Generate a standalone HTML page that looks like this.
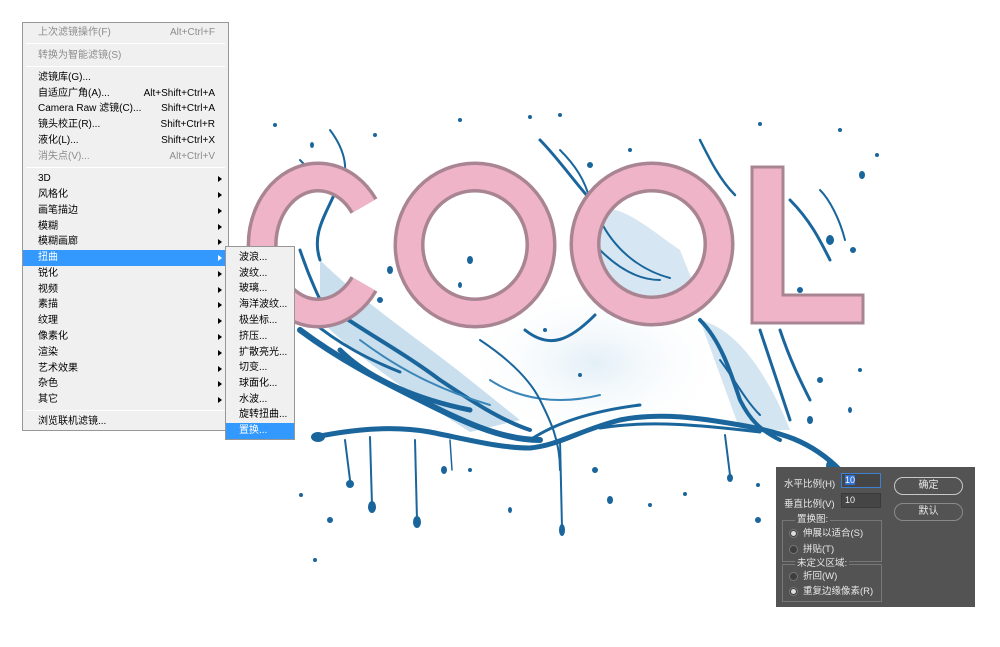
<!DOCTYPE html>
<html><head><meta charset="utf-8"><style>
*{margin:0;padding:0;box-sizing:border-box}
body{width:1000px;height:647px;background:#fff;position:relative;overflow:hidden;font-family:"Liberation Sans","Noto Sans CJK SC",sans-serif}
.menu{position:absolute;left:22px;top:22px;width:207px;height:409px;background:#f0f0f0;border:1px solid #979797;font-size:10px;color:#000}
.it{position:absolute;left:0;width:205px;height:16px;line-height:16px;padding-left:15px}
.it .k{position:absolute;right:13px;top:0}
.it.d{color:#8d8d8d}
.it .a{position:absolute;right:6px;top:5px;width:0;height:0;border-left:4px solid #000;border-top:3px solid transparent;border-bottom:3px solid transparent}
.it.hl{background:#3399ff;color:#fff}
.it.hl .a{border-left-color:#fff}
.sep{position:absolute;left:3px;right:3px;height:1px;background:#c8c8c8;border-bottom:1px solid #fff}
.sub{position:absolute;left:225px;top:246px;width:70px;height:194px;background:#f0f0f0;border:1px solid #979797;font-size:10px}
.sub .it{width:68px;padding-left:13px}
.dlg{position:absolute;left:776px;top:467px;width:199px;height:140px;background:#535353;color:#e8e8e8;font-size:9.5px}
.lbl{position:absolute;left:8px}
.inp{position:absolute;left:65px;width:40px;height:15px;background:#454545;border:1px solid #3a3a3a;font-size:9px;padding-left:3px;line-height:13px;color:#eee}
.btn{position:absolute;left:118px;width:69px;height:18px;border:1px solid #c8c8c8;border-radius:9px;text-align:center;line-height:16px;font-size:10px}
.grp{position:absolute;left:6px;width:100px;border:1px solid #777}
.gt{position:absolute;left:12px;top:-7px;background:#535353;padding:0 2px;line-height:12px}
.rad{position:absolute;left:6px;font-size:9.5px;line-height:12px;padding-left:14px}
.rad:before{content:"";position:absolute;left:0;top:1px;width:9px;height:9px;border-radius:50%;background:#3e3e3e;border:1px solid #777;box-sizing:border-box}
.rad.on:after{content:"";position:absolute;left:2px;top:3px;width:5px;height:5px;border-radius:50%;background:#ddd}
</style></head><body>
<svg width="1000" height="647" style="position:absolute;left:0;top:0">
<defs><radialGradient id="pw" cx="0.5" cy="0.5" r="0.5"><stop offset="0" stop-color="#e3eff7"/><stop offset="1" stop-color="#fff" stop-opacity="0"/></radialGradient></defs>
<g>
<path d="M460 320 C520 290 600 270 710 290 L730 430 C650 440 560 450 470 440 Z" fill="url(#pw)"/>
<path d="M590 210 C620 200 650 230 680 250 L700 300 C660 320 610 310 590 290 Z" fill="#d6e7f3"/>
<path d="M320 260 C360 300 420 340 470 380 L520 420 L470 432 C420 400 360 360 320 320 Z" fill="#c9dfee"/>
<path d="M700 320 C740 330 770 380 790 430 L740 430 Z" fill="#d2e5f1"/>
</g>
<g fill="none" stroke="#1a669c" stroke-linecap="round">
<path d="M300 330 C340 360 380 380 420 400 C460 420 500 440 540 440" stroke-width="6"/>
<path d="M320 300 C360 330 400 350 440 380 C470 400 500 420 530 430" stroke-width="4"/>
<path d="M310 320 C340 345 370 360 400 372" stroke-width="3"/>
<path d="M340 350 C370 380 420 400 470 410" stroke-width="5"/>
<path d="M360 340 C400 370 440 390 490 405" stroke-width="2" stroke="#3b86b8"/>
<path d="M315 437 C350 430 390 425 430 432 C470 440 500 448 530 448 C560 445 580 430 620 420 C660 412 700 418 740 425 C780 432 810 440 840 470" stroke-width="5"/>
<path d="M600 428 C650 420 700 425 760 432" stroke-width="3"/>
<path d="M530 440 C560 420 600 410 640 405" stroke-width="3"/>
<path d="M490 380 C520 400 560 405 600 395" stroke-width="2" stroke="#3b86b8"/>
<path d="M525 330 C550 350 570 340 595 315" stroke-width="3"/>
<path d="M480 340 C510 360 530 380 540 400 C550 420 560 440 560 470" stroke-width="2"/>
<path d="M700 320 C720 340 730 370 740 400 C750 420 760 430 780 440" stroke-width="4"/>
<path d="M760 330 C770 360 780 390 790 420" stroke-width="3"/>
<path d="M370 437 L372 505" stroke-width="2"/><path d="M415 440 L417 520" stroke-width="2"/>
<path d="M560 440 L562 528" stroke-width="2"/><path d="M345 440 L350 480" stroke-width="2"/>
<path d="M450 440 L452 470" stroke-width="1.5"/><path d="M725 435 L730 475" stroke-width="2"/>
<path d="M300 250 C310 280 320 300 330 320" stroke-width="3"/>
<path d="M340 180 C330 210 310 230 320 260" stroke-width="3"/>
<path d="M330 130 C345 150 350 170 340 190" stroke-width="2"/>
<path d="M300 160 C310 170 318 180 325 190" stroke-width="2"/>
<path d="M540 140 C560 160 580 190 600 210" stroke-width="3"/>
<path d="M560 150 C575 165 585 180 590 200" stroke-width="2"/>
<path d="M700 140 C710 160 720 180 735 195" stroke-width="2.5"/>
<path d="M600 220 C615 250 640 270 670 278" stroke-width="2"/>
<path d="M790 200 C810 220 820 240 830 260" stroke-width="3"/>
<path d="M820 190 C830 200 840 220 845 240" stroke-width="2"/>
<path d="M600 250 C620 270 640 280 660 280" stroke-width="2"/>
<path d="M780 330 C790 360 800 380 810 400" stroke-width="3"/>
<path d="M720 360 C735 380 745 400 760 415" stroke-width="2"/>
</g>
<g fill="#1a669c">
<ellipse cx="318" cy="437" rx="7" ry="5"/><ellipse cx="372" cy="507" rx="4" ry="6"/><ellipse cx="417" cy="522" rx="4" ry="6"/><ellipse cx="562" cy="530" rx="3" ry="6"/><ellipse cx="350" cy="484" rx="4" ry="4"/>
<ellipse cx="275" cy="125" rx="2" ry="2"/><ellipse cx="312" cy="145" rx="2" ry="3"/><ellipse cx="375" cy="135" rx="2" ry="2"/><ellipse cx="460" cy="120" rx="2" ry="2"/><ellipse cx="530" cy="117" rx="2" ry="2"/><ellipse cx="560" cy="115" rx="2" ry="2"/><ellipse cx="590" cy="165" rx="3" ry="3"/><ellipse cx="630" cy="150" rx="2" ry="2"/><ellipse cx="760" cy="124" rx="2" ry="2"/><ellipse cx="840" cy="130" rx="2" ry="2"/><ellipse cx="862" cy="175" rx="3" ry="4"/><ellipse cx="877" cy="155" rx="2" ry="2"/><ellipse cx="830" cy="240" rx="4" ry="5"/><ellipse cx="800" cy="290" rx="3" ry="3"/><ellipse cx="853" cy="250" rx="3" ry="3"/>
<ellipse cx="470" cy="260" rx="3" ry="4"/><ellipse cx="460" cy="285" rx="2" ry="3"/><ellipse cx="500" cy="310" rx="2" ry="2"/><ellipse cx="545" cy="330" rx="2" ry="2"/><ellipse cx="380" cy="300" rx="3" ry="3"/><ellipse cx="390" cy="270" rx="3" ry="4"/><ellipse cx="420" cy="232" rx="3" ry="3"/>
<ellipse cx="301" cy="495" rx="2" ry="2"/><ellipse cx="330" cy="520" rx="3" ry="3"/><ellipse cx="315" cy="560" rx="2" ry="2"/><ellipse cx="444" cy="470" rx="3" ry="4"/><ellipse cx="470" cy="470" rx="2" ry="2"/><ellipse cx="510" cy="510" rx="2" ry="3"/><ellipse cx="595" cy="470" rx="3" ry="3"/><ellipse cx="610" cy="500" rx="3" ry="4"/><ellipse cx="650" cy="505" rx="2" ry="2"/><ellipse cx="685" cy="494" rx="2" ry="2"/><ellipse cx="730" cy="478" rx="3" ry="4"/><ellipse cx="758" cy="485" rx="2" ry="2"/><ellipse cx="758" cy="520" rx="3" ry="3"/><ellipse cx="830" cy="466" rx="4" ry="6"/><ellipse cx="850" cy="410" rx="2" ry="3"/><ellipse cx="860" cy="370" rx="2" ry="2"/><ellipse cx="820" cy="380" rx="3" ry="3"/><ellipse cx="810" cy="420" rx="3" ry="4"/><ellipse cx="580" cy="375" rx="2" ry="2"/><ellipse cx="290" cy="420" rx="2" ry="4"/>
</g>
<g fill="none">
<path d="M364 206 A56 68 0 1 0 364 284" stroke="#a98593" stroke-width="31"/>
<path d="M364 206 A56 68 0 1 0 364 284" stroke="#f0b4c8" stroke-width="24"/>
<ellipse cx="475" cy="245" rx="66" ry="68" stroke="#a98593" stroke-width="31"/>
<ellipse cx="475" cy="245" rx="66" ry="68" stroke="#f0b4c8" stroke-width="24"/>
<ellipse cx="652" cy="244" rx="67" ry="67" stroke="#a98593" stroke-width="31"/>
<ellipse cx="652" cy="244" rx="67" ry="67" stroke="#f0b4c8" stroke-width="24"/>
</g>
<path d="M752 167 H783 V295 H863 V323 H752 Z" fill="#f0b4c8" stroke="#a98593" stroke-width="3"/>
</svg>

<div class="menu">
<div class="it d" style="top:2px">上次滤镜操作(F)<span class="k">Alt+Ctrl+F</span></div>
<div class="sep" style="top:20px"></div>
<div class="it d" style="top:25px">转换为智能滤镜(S)</div>
<div class="sep" style="top:43px"></div>
<div class="it" style="top:47px">滤镜库(G)...</div>
<div class="it" style="top:63px">自适应广角(A)...<span class="k">Alt+Shift+Ctrl+A</span></div>
<div class="it" style="top:78px">Camera Raw 滤镜(C)...<span class="k">Shift+Ctrl+A</span></div>
<div class="it" style="top:94px">镜头校正(R)...<span class="k">Shift+Ctrl+R</span></div>
<div class="it" style="top:110px">液化(L)...<span class="k">Shift+Ctrl+X</span></div>
<div class="it d" style="top:126px">消失点(V)...<span class="k">Alt+Ctrl+V</span></div>
<div class="sep" style="top:144px"></div>
<div class="it" style="top:148px">3D<span class="a"></span></div>
<div class="it" style="top:164px">风格化<span class="a"></span></div>
<div class="it" style="top:180px">画笔描边<span class="a"></span></div>
<div class="it" style="top:196px">模糊<span class="a"></span></div>
<div class="it" style="top:211px">模糊画廊<span class="a"></span></div>
<div class="it hl" style="top:227px">扭曲<span class="a"></span></div>
<div class="it" style="top:243px">锐化<span class="a"></span></div>
<div class="it" style="top:259px">视频<span class="a"></span></div>
<div class="it" style="top:274px">素描<span class="a"></span></div>
<div class="it" style="top:290px">纹理<span class="a"></span></div>
<div class="it" style="top:306px">像素化<span class="a"></span></div>
<div class="it" style="top:322px">渲染<span class="a"></span></div>
<div class="it" style="top:338px">艺术效果<span class="a"></span></div>
<div class="it" style="top:353px">杂色<span class="a"></span></div>
<div class="it" style="top:369px">其它<span class="a"></span></div>
<div class="sep" style="top:387px"></div>
<div class="it" style="top:391px">浏览联机滤镜...</div>
</div>

<div class="sub">
<div class="it" style="top:3px">波浪...</div>
<div class="it" style="top:19px">波纹...</div>
<div class="it" style="top:34px">玻璃...</div>
<div class="it" style="top:50px">海洋波纹...</div>
<div class="it" style="top:66px">极坐标...</div>
<div class="it" style="top:82px">挤压...</div>
<div class="it" style="top:98px">扩散亮光...</div>
<div class="it" style="top:113px">切变...</div>
<div class="it" style="top:129px">球面化...</div>
<div class="it" style="top:145px">水波...</div>
<div class="it" style="top:160px">旋转扭曲...</div>
<div class="it hl" style="top:176px">置换...</div>
</div>

<div class="dlg">
<div class="lbl" style="top:9px">水平比例(H)</div>
<div class="inp" style="top:6px;border-color:#3f7fd0"><span style="background:#2f6fd6;color:#fff">10</span></div>
<div class="lbl" style="top:29px">垂直比例(V)</div>
<div class="inp" style="top:26px">10</div>
<div class="btn" style="top:10px">确定</div>
<div class="btn" style="top:36px;border-color:#8a8a8a">默认</div>
<div class="grp" style="top:53px;height:42px"><span class="gt">置换图:</span>
<div class="rad on" style="top:7px">伸展以适合(S)</div>
<div class="rad" style="top:23px">拼贴(T)</div></div>
<div class="grp" style="top:97px;height:38px"><span class="gt">未定义区域:</span>
<div class="rad" style="top:6px">折回(W)</div>
<div class="rad on" style="top:21px">重复边缘像素(R)</div></div>
</div>
</body></html>
